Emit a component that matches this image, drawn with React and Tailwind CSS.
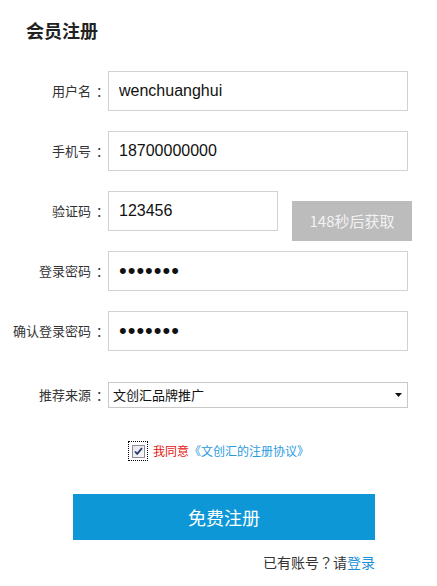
import { useState } from 'react';

const font = "font-['Liberation_Sans','Noto_Sans_CJK_SC',sans-serif]";
const cjk = "font-['Noto_Sans_CJK_SC',sans-serif]";

function Label({ children, className = '' }) {
  return (
    <label className={`${cjk} w-[104px] text-right text-[13px] text-[#333] whitespace-nowrap ${className}`}>
      {children}
      <span className="ml-[5px] mr-[-5px]">：</span>
    </label>
  );
}

function Field({ label, children }) {
  return (
    <div className="flex items-start">
      <Label className="h-10 leading-10">{label}</Label>
      <div className="ml-[4px] flex items-start">{children}</div>
    </div>
  );
}

function TextInput({ value, type = 'text', width = 'w-[300px]' }) {
  const pw = type === 'password';
  return (
    <input
      type={type}
      defaultValue={value}
      className={`${width} h-10 border border-[#d2d2d2] px-[10px] text-[#111] outline-none ${pw ? 'text-[22px] tracking-[1px]' : 'text-[16px]'}`}
    />
  );
}

export default function App() {
  const [agree, setAgree] = useState(true);

  return (
    <div className={`${font} w-[437px] h-[586px] bg-white text-[#333]`}>
      <h1 className={`${cjk} pl-[26px] pt-[20px] text-[18px] leading-5 font-bold text-[#222]`}>会员注册</h1>

      <form className="mt-[31px] flex flex-col gap-5" onSubmit={(e) => e.preventDefault()}>
        <Field label="用户名">
          <TextInput value="wenchuanghui" />
        </Field>
        <Field label="手机号">
          <TextInput value="18700000000" />
        </Field>
        <Field label="验证码">
          <TextInput value="123456" width="w-[170px]" />
          <button
            type="button"
            className={`${cjk} ml-[14px] mt-[10px] mb-[-10px] w-[120px] h-10 bg-[#bcbcbc] text-[15px] text-[#f2f2f2]`}
          >
            148秒后获取
          </button>
        </Field>
        <Field label="登录密码">
          <TextInput value="1234567" type="password" />
        </Field>
        <Field label="确认登录密码">
          <TextInput value="1234567" type="password" />
        </Field>
      </form>

      <div className="mt-[31px] flex items-center">
        <Label>推荐来源</Label>
        <div className="ml-[4px] relative w-[300px] h-[26px]">
          <select className={`${cjk} w-full h-full appearance-none border border-[#c8c8c8] pl-[4px] text-[13px] text-[#111] outline-none bg-white`}>
            <option>文创汇品牌推广</option>
            <option>朋友推荐</option>
            <option>搜索引擎</option>
          </select>
          <svg className="absolute right-[6px] top-[11px] pointer-events-none" width="7" height="4" viewBox="0 0 7 4">
            <path d="M0 0h7L3.5 4z" fill="#111" />
          </svg>
        </div>
      </div>

      <div className={`${cjk} mt-[33px] ml-[128px] flex items-center text-[12px]`}>
        <span
          className="w-[20px] h-[20px] border border-dotted border-black flex items-center justify-center cursor-pointer"
          onClick={() => setAgree(!agree)}
        >
          <span className="w-[13px] h-[13px] border border-[#8e8f9c] bg-gradient-to-br from-[#e4e4ea] to-[#fafafc] flex items-center justify-center">
            {agree && (
              <svg width="9" height="9" viewBox="0 0 9 9">
                <path d="M1 4.5l2.2 2.4L8 1.2" stroke="#2a3a6e" strokeWidth="1.8" fill="none" />
              </svg>
            )}
          </span>
        </span>
        <span className="ml-[5px] text-[#e60f0f]">我同意</span>
        <a href="#" className="text-[#2a9ae0]">《文创汇的注册协议》</a>
      </div>

      <div className={`${cjk} mt-[33px] ml-[73px] w-[302px] flex flex-col items-end`}>
        <button type="button" className="w-full h-[46px] bg-[#0e97d7] text-white text-[18px]">
          免费注册
        </button>
        <p className="mt-[12px] text-[14px] leading-5 text-[#333]">
          已有账号<span className="font-['Noto_Sans_CJK_TC',sans-serif]">？</span>请<a href="#" className="text-[#1d90d8]">登录</a>
        </p>
      </div>
    </div>
  );
}
